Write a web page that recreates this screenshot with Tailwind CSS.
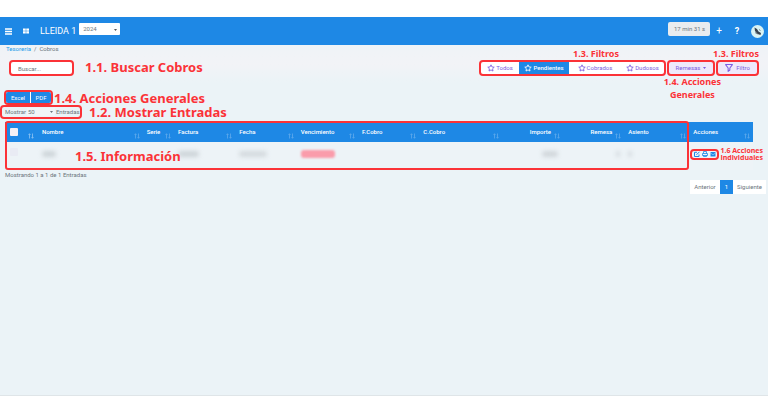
<!DOCTYPE html>
<html lang="es">
<head>
<meta charset="utf-8">
<meta name="viewport" content="width=device-width, initial-scale=1">
<title>Cobros</title>
<script src="https://cdn.jsdelivr.net/npm/@tailwindcss/browser@4"></script>
</head>
<body class="flex min-h-screen flex-col bg-white pt-[17px] pb-[17px] font-[Roboto,'Liberation_Sans',Arial,sans-serif] text-[6px] leading-[8px] text-[#6c757d]">
<svg class="hidden" aria-hidden="true">
  <symbol id="star" viewBox="0 0 24 24"><path d="M12 2.5l2.9 6.3 6.8.8-5 4.700 1.300 6.800-6-3.400-6 3.400 1.300-6.800-5-4.700 6.800-.8z" fill="none" stroke="currentColor" stroke-width="2.600" stroke-linejoin="round"/></symbol>
  <symbol id="sort" viewBox="0 0 12 12"><path d="M3 11V1.500M1 3.500l2-2 2 2M9 1v9.500M7 8.500l2 2 2-2" fill="none" stroke="currentColor" stroke-width="1.200"/></symbol>
</svg>

<header class="flex h-7 items-center bg-[#1e88e5] pr-1 pl-[5px] text-white">
  <button aria-label="Menú" class="mr-[11px] block"><svg class="h-[7px] w-[7px]" viewBox="0 0 7 7"><path d="M0 1h7M0 3.500h7M0 6h7" stroke="currentColor" stroke-width="1.400"/></svg></button>
  <button aria-label="Aplicaciones" class="mr-[11px] block"><svg class="h-[6px] w-[6px]" viewBox="0 0 12 12"><path d="M0 1h5.500v4.500H0zM6.500 1H12v4.500H6.500zM0 6.500h5.500V11H0zM6.500 6.500H12V11H6.500z" fill="currentColor"/></svg></button>
  <span class="text-[9px] leading-3">LLEIDA 1</span>
  <div class="relative mb-1 ml-[3px]">
    <select aria-label="Año" class="block h-3 w-[41px] appearance-none rounded-[1px] bg-white pl-1 text-[6px] leading-3 text-[#6c757d]"><option>2024</option></select>
    <svg class="pointer-events-none absolute top-[6px] right-[3px] h-[2px] w-[3px] text-[#555]" viewBox="0 0 6 4"><path d="M0 0h6L3 4z" fill="currentColor"/></svg>
  </div>
  <div class="ml-auto flex items-center">
    <span class="mb-1 flex h-[14px] w-[42px] items-center rounded-[2px] bg-[#e9ecef] pl-[6px] text-[6px] text-[#6c757d]">17 min 31 s</span>
    <button aria-label="Añadir" class="ml-[6px] w-[6px] text-[10px] leading-3">+</button>
    <button aria-label="Ayuda" class="ml-[12px] w-[6px] text-[9px] leading-3 font-bold">?</button>
    <button aria-label="Perfil" class="ml-[11px] block"><svg class="h-[13px] w-[13px]" viewBox="0 0 26 26"><circle cx="13" cy="13" r="13" fill="#d9f3f4"/><path d="M7 5l5 3 3 5 5 3-1 4-6-2-5-6z" fill="#39434f"/><path d="M8 15l5 3M16 9l3 2" stroke="#7d8b92" stroke-width="2"/></svg></button>
  </div>
</header>

<main class="relative flex grow flex-col border-b border-[#dfe5e8] bg-[#ebf3f7]">
  <div class="bg-linear-to-b from-[#eff3f7] via-[#f2f3f7] to-[#ebf3f7] pb-[7px]">
    <nav aria-label="Ruta" class="px-[6px] text-[6px]"><a href="#" class="text-[#1e9be9]">Tesorería</a><span class="mx-[3px]">/</span><span>Cobros</span></nav>
    <div class="flex items-center pt-[7px] pr-[9px] pl-[9px]">
      <input type="text" aria-label="Buscar cobros" placeholder="Buscar..." class="block h-4 w-[65px] rounded-[4px] border-2 border-[#fb3237] bg-white px-[7px] text-[6px] placeholder:text-[#6c757d]">
      <div class="ml-auto flex gap-[1px] text-[#7c5ce0]">
        <div class="flex h-4 w-[187px] overflow-hidden rounded-[4px] border-2 border-[#fb3237] bg-white">
          <button class="flex w-[38px] items-center justify-center gap-[1px]"><svg class="h-2 w-2"><use href="#star"/></svg>Todos</button>
          <button class="flex w-[50px] items-center justify-center gap-[1px] bg-[#1e88e5] font-medium text-white"><svg class="h-2 w-2"><use href="#star"/></svg>Pendientes</button>
          <button class="flex w-[52px] items-center justify-center gap-[1px]"><svg class="h-2 w-2"><use href="#star"/></svg>Cobrados</button>
          <button class="flex grow items-center justify-center gap-[1px]"><svg class="h-2 w-2"><use href="#star"/></svg>Dudosos</button>
        </div>
        <button class="flex h-4 w-12 items-center justify-center gap-[3px] rounded-[4px] border-2 border-[#fb3237] bg-[#eee9fb]">Remesas<svg class="h-[2px] w-[3px]" viewBox="0 0 6 4"><path d="M0 0h6L3 4z" fill="currentColor"/></svg></button>
        <button class="flex h-4 w-[43px] items-center justify-center gap-[3px] rounded-[4px] border-2 border-[#fb3237] bg-[#eee9fb]"><svg class="h-2 w-2" viewBox="0 0 14 14"><path d="M1 1h12L8.500 7v3.500L5.500 13V7z" fill="none" stroke="currentColor" stroke-width="1.800" stroke-linejoin="round"/></svg>Filtro</button>
      </div>
    </div>
  </div>

  <div class="flex flex-col items-start pt-[7px]">
    <div class="ml-1 flex h-[15px] w-[49px] gap-[1px] overflow-hidden rounded-[4px] border-2 border-[#fb3237] bg-white text-white">
      <button class="w-6 bg-[#1e88e5]">Excel</button>
      <button class="grow bg-[#1e88e5]">PDF</button>
    </div>
    <label class="flex h-[14px] items-center rounded-[4px] border-2 border-[#fb3237] pl-[3px]">Mostrar
      <span class="relative mx-[1px] block">
        <select class="block h-2 w-7 appearance-none bg-[#f1f5f8] pl-[1px] text-[6px] leading-[8px]"><option>50</option></select>
        <svg class="pointer-events-none absolute top-[3px] right-[2px] h-[2px] w-[3px]" viewBox="0 0 6 4"><path d="M0 0h6L3 4z" fill="currentColor"/></svg>
      </span>Entradas</label>
  </div>

  <div class="relative mt-[3px] mr-[15px] ml-[5px]">
    <table class="w-full table-fixed border-collapse text-left">
      <colgroup><col class="w-[4.400%]"><col class="w-[14%]"><col class="w-[4.200%]"><col class="w-[8.200%]"><col class="w-[8.200%]"><col class="w-[8.200%]"><col class="w-[8.200%]"><col class="w-[11%]"><col class="w-[8.200%]"><col class="w-[8.200%]"><col class="w-[8.700%]"><col class="w-[8.500%]"></colgroup>
      <thead class="bg-[#1e88e5] text-white">
        <tr class="h-5">
          <th class="relative px-[5px] font-medium"><input type="checkbox" aria-label="Seleccionar todo" class="block h-2 w-2 appearance-none rounded-[1px] bg-[#f4f0f5]"><svg class="absolute right-[4px] bottom-[3px] h-[6px] w-[6px] text-[#b5d8f7]"><use href="#sort"/></svg></th>
          <th class="relative px-1 font-medium">Nombre<svg class="absolute right-[3px] bottom-[3px] h-[6px] w-[6px] text-[#75b6ef]"><use href="#sort"/></svg></th>
          <th class="relative px-1 font-medium">Serie<svg class="absolute right-[3px] bottom-[3px] h-[6px] w-[6px] text-[#75b6ef]"><use href="#sort"/></svg></th>
          <th class="relative px-1 font-medium">Factura<svg class="absolute right-[3px] bottom-[3px] h-[6px] w-[6px] text-[#75b6ef]"><use href="#sort"/></svg></th>
          <th class="relative px-1 font-medium">Fecha<svg class="absolute right-[3px] bottom-[3px] h-[6px] w-[6px] text-[#75b6ef]"><use href="#sort"/></svg></th>
          <th class="relative px-1 font-medium">Vencimiento<svg class="absolute right-[3px] bottom-[3px] h-[6px] w-[6px] text-[#75b6ef]"><use href="#sort"/></svg></th>
          <th class="relative px-1 font-medium">F.Cobro<svg class="absolute right-[3px] bottom-[3px] h-[6px] w-[6px] text-[#75b6ef]"><use href="#sort"/></svg></th>
          <th class="relative px-1 font-medium">C.Cobro<svg class="absolute right-[3px] bottom-[3px] h-[6px] w-[6px] text-[#75b6ef]"><use href="#sort"/></svg></th>
          <th class="relative pr-3 text-right font-medium">Importe<svg class="absolute right-[3px] bottom-[3px] h-[6px] w-[6px] text-[#75b6ef]"><use href="#sort"/></svg></th>
          <th class="relative pr-3 text-right font-medium">Remesa<svg class="absolute right-[3px] bottom-[3px] h-[6px] w-[6px] text-[#75b6ef]"><use href="#sort"/></svg></th>
          <th class="relative px-1 font-medium">Asiento<svg class="absolute right-[3px] bottom-[3px] h-[6px] w-[6px] text-[#75b6ef]"><use href="#sort"/></svg></th>
          <th class="relative px-1 font-medium">Acciones<svg class="absolute right-[3px] bottom-[3px] h-[6px] w-[6px] text-[#75b6ef]"><use href="#sort"/></svg></th>
        </tr>
      </thead>
      <tbody>
        <tr class="h-7 bg-[#edf3f7]">
          <td class="px-[5px] pb-2"><input type="checkbox" aria-label="Seleccionar cobro" class="block h-2 w-2 appearance-none rounded-[1px] bg-[#e9ebf4]"></td>
          <td class="px-1 pb-[5px]"><div class="h-[6px] w-[14px] rounded-sm bg-[#cdd4d8] blur-[2px]"></div></td>
          <td></td>
          <td class="px-1 pb-[5px]"><div class="h-[6px] w-[21px] rounded-sm bg-[#cdd4d8] blur-[2px]"></div></td>
          <td class="px-1 pb-[5px]"><div class="h-[6px] w-7 rounded-sm bg-[#d4dade] blur-[2px]"></div></td>
          <td class="px-1 pb-[5px]"><div class="h-2 w-[34px] rounded-[3px] bg-[#fa9cab] blur-[1px]"></div></td>
          <td></td>
          <td></td>
          <td class="pr-[5px] pb-[5px]"><div class="ml-auto h-[6px] w-4 rounded-sm bg-[#d0d6da] blur-[2px]"></div></td>
          <td class="pr-1 pb-[5px]"><div class="ml-auto h-[6px] w-1 rounded-sm bg-[#d4dade] blur-[2px]"></div></td>
          <td class="px-1 pb-[5px]"><div class="h-[6px] w-1 rounded-sm bg-[#d4dade] blur-[2px]"></div></td>
          <td class="pb-1 pl-[1px]">
            <div class="flex h-[11px] w-[29px] items-center justify-center gap-[2px] rounded-[4px] border-2 border-[#fb3237] text-[#1e88e5]">
              <button aria-label="Editar" class="block"><svg class="h-[6px] w-[6px]" viewBox="0 0 12 12"><path d="M10 7v4H1V2.500h5M5 7.500L11 1.500" fill="none" stroke="currentColor" stroke-width="2"/></svg></button>
              <button aria-label="Imprimir" class="block"><svg class="h-[6px] w-[6px]" viewBox="0 0 12 12"><path d="M3 5V1h6v4M1 5h10v4H1zM3 8v3h6V8" fill="none" stroke="currentColor" stroke-width="1.600"/></svg></button>
              <button aria-label="Enviar" class="block"><svg class="h-[6px] w-[6px]" viewBox="0 0 12 12"><path d="M1 2h10v9H1z" fill="currentColor"/><path d="M1 4l5 3.500L11 4" fill="none" stroke="#d8eafb" stroke-width="1"/></svg></button>
            </div>
          </td>
        </tr>
      </tbody>
    </table>
    <div class="pointer-events-none absolute inset-y-0 -top-[1px] left-0 w-[91.500%] rounded-[3px] border-2 border-[#fb3237]"></div>
  </div>
  <p class="mt-[1px] px-[5px]">Mostrando 1 a 1 de 1 Entradas</p>
  <nav aria-label="Paginación" class="mt-[1px] mr-[2px] ml-auto flex h-[14px] bg-white">
    <button class="w-[30px]">Anterior</button>
    <button class="w-[13px] bg-[#1e88e5] text-white">1</button>
    <button class="w-[33px]">Siguiente</button>
  </nav>

  <div class="pointer-events-none absolute inset-0 font-['Noto_Sans','Open_Sans',sans-serif] text-[13px] leading-[14px] font-bold whitespace-nowrap text-[#fb3237]">
    <span class="absolute top-[15px] left-[85px]">1.1. Buscar Cobros</span>
    <span class="absolute top-[46px] left-[54px]">1.4. Acciones Generales</span>
    <span class="absolute top-[60px] left-[89px]">1.2. Mostrar Entradas</span>
    <span class="absolute top-[104px] left-[75px]">1.5. Información</span>
    <span class="absolute top-[2px] right-[149px] text-[9px] leading-[13px]">1.3. Filtros</span>
    <span class="absolute top-[2px] right-[9px] text-[9px] leading-[13px]">1.3. Filtros</span>
    <span class="absolute top-[30px] right-[47px] text-center text-[9px] leading-[13px]">1.4. Acciones<br>Generales</span>
    <span class="absolute top-[102px] right-[5px] text-center font-['Open_Sans',sans-serif] text-[7px] leading-[7px]">1.6 Acciones<br>Individuales</span>
  </div>
</main>
</body>
</html>
